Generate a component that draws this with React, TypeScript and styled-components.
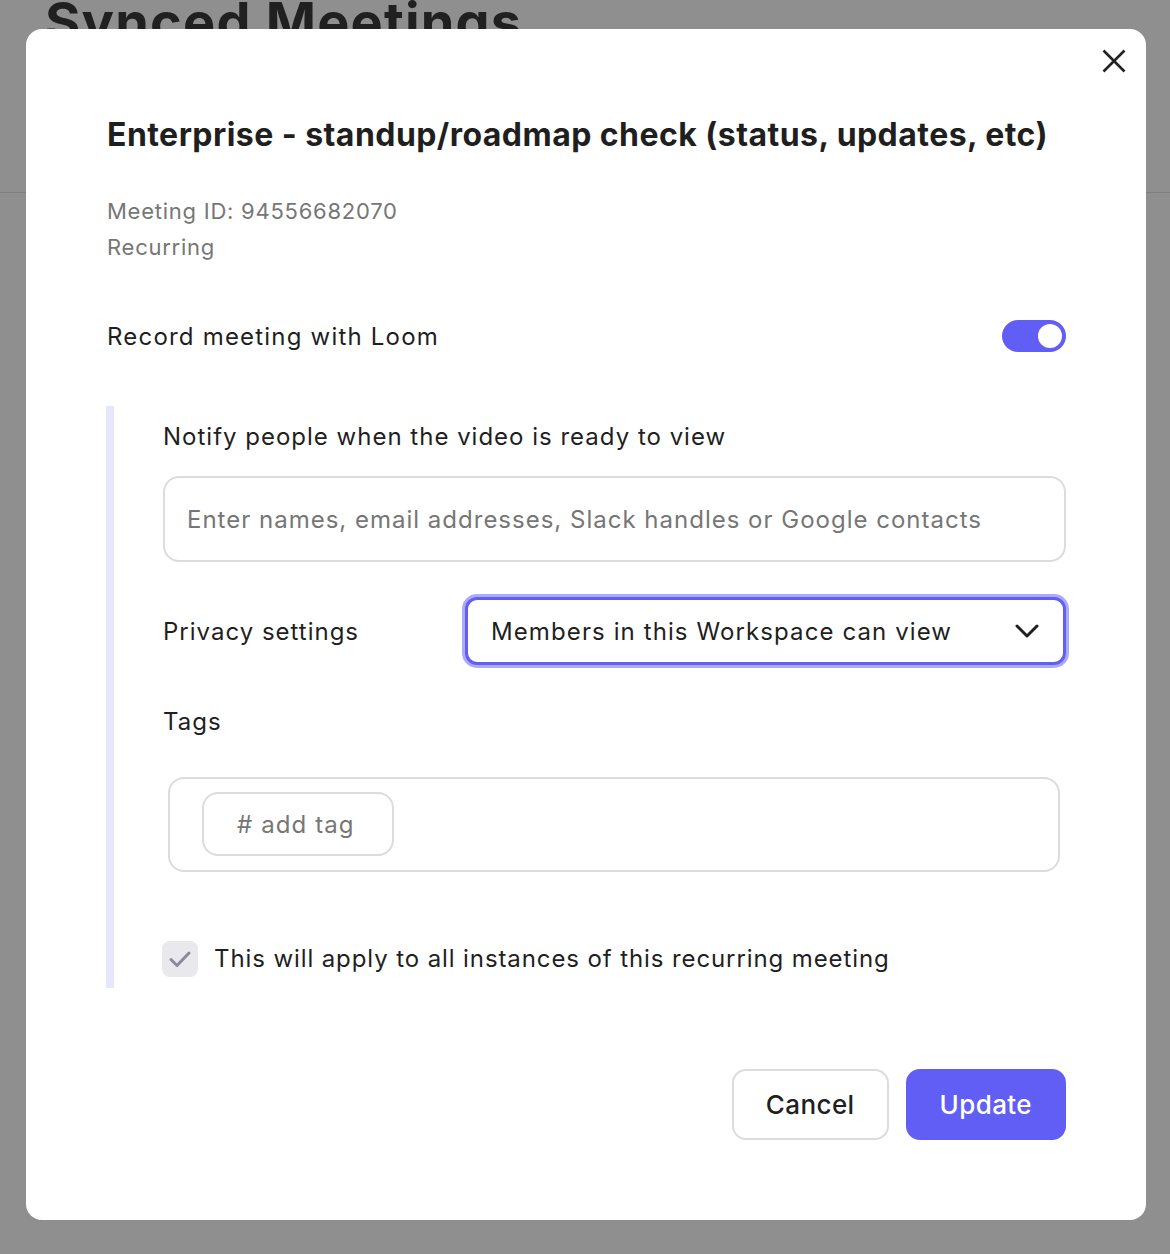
import React, { useState } from 'react';
import styled, { createGlobalStyle } from 'styled-components';

const GlobalStyle = createGlobalStyle`
  html, body {
    margin: 0;
    padding: 0;
  }
  body {
    font-family: Inter, "Open Sans", sans-serif;
    color: #1f1f1f;
    background: #ffffff;
    overflow: hidden;
  }
  * {
    box-sizing: border-box;
  }
`;

const Page = styled.div`
  height: 1254px;
  background: #ffffff;
`;

const PageHeader = styled.header`
  display: flow-root;
  height: 193px;
  padding: 0 45px;
  border-bottom: 1px solid #e2e2e2;
`;

const PageTitle = styled.h1`
  margin: -5px 0 0;
  font-size: 54px;
  line-height: 54px;
  font-weight: 700;
  color: #3a3a3a;
  letter-spacing: 1.2px;
`;

const Overlay = styled.div`
  position: fixed;
  inset: 0;
  background: rgba(0, 0, 0, 0.44);
  padding: 29px 24px 0 26px;
`;

const Modal = styled.div`
  position: relative;
  width: 1120px;
  background: #ffffff;
  border-radius: 16px;
  padding: 86px 80px 80px 81px;
  letter-spacing: 1px;
`;

const CloseButton = styled.button`
  position: absolute;
  top: 20px;
  right: 20px;
  width: 24px;
  height: 24px;
  padding: 0;
  border: 0;
  background: none;
  color: #222222;
  cursor: pointer;
`;

const Title = styled.h2`
  margin: 0;
  font-size: 32px;
  line-height: 40px;
  font-weight: 700;
  color: #1f1f1f;
  letter-spacing: 0.45px;
`;

const Meta = styled.div`
  margin-top: 38px;
  font-size: 22px;
  line-height: 36px;
  color: #767676;
  letter-spacing: 0.75px;
`;

const RecordRow = styled.div`
  margin-top: 55px;
  display: flex;
  align-items: center;
  justify-content: space-between;
  height: 32px;
  font-size: 24px;
  letter-spacing: 1.2px;
`;

const Toggle = styled.button<{ $on: boolean }>`
  position: relative;
  width: 64px;
  height: 32px;
  padding: 0;
  border: 0;
  border-radius: 16px;
  background: ${(p) => (p.$on ? '#615ef5' : '#d6d6dc')};
  cursor: pointer;

  &::after {
    content: '';
    position: absolute;
    top: 4px;
    left: ${(p) => (p.$on ? '36px' : '4px')};
    width: 24px;
    height: 24px;
    border-radius: 50%;
    background: #ffffff;
  }
`;

const Section = styled.section`
  margin: 54px 0 0 -1px;
  border-left: 8px solid #e6e6fc;
  padding: 15px 0 11px 49px;
`;

const FieldLabel = styled.div<{ $gap?: number }>`
  margin-top: ${(p) => p.$gap ?? 0}px;
  font-size: 24px;
  line-height: 32px;
`;

const TextInput = styled.input`
  display: block;
  width: 100%;
  margin-top: 23px;
  height: 86px;
  padding: 0 22px;
  border: 2px solid #dcdce0;
  border-radius: 16px;
  font-family: inherit;
  font-size: 24px;
  letter-spacing: 1px;
  color: #1f1f1f;
  outline: none;

  &::placeholder {
    color: #767676;
  }
`;

const PrivacyRow = styled.div`
  margin-top: 35px;
  display: grid;
  grid-template-columns: 302px 1fr;
  align-items: center;
  font-size: 24px;
`;

const SelectBox = styled.button`
  display: flex;
  align-items: center;
  justify-content: space-between;
  height: 68px;
  padding: 0 24px 0 23px;
  border: 3px solid #615ef5;
  border-radius: 12px;
  box-shadow: 0 0 0 3px #acaafa;
  background: #ffffff;
  font-family: inherit;
  font-size: 24px;
  letter-spacing: 1.1px;
  color: #1f1f1f;
  cursor: pointer;
`;

const TagBox = styled.div`
  margin: 39px 6px 0 5px;
  height: 95px;
  padding: 13px 30px 0 32px;
  border: 2px solid #dcdce0;
  border-radius: 16px;
`;

const TagChip = styled.button`
  height: 64px;
  width: 192px;
  padding: 0 0 0 33px;
  text-align: left;
  border: 2px solid #dcdce0;
  border-radius: 16px;
  background: #ffffff;
  font-family: inherit;
  font-size: 24px;
  letter-spacing: 1.1px;
  color: #767676;
  cursor: pointer;
`;

const CheckRow = styled.label`
  margin-top: 69px;
  display: flex;
  align-items: center;
  gap: 16px;
  font-size: 24px;
  line-height: 36px;
  letter-spacing: 0.9px;
`;

const CheckBox = styled.span`
  display: flex;
  align-items: center;
  justify-content: center;
  width: 36px;
  height: 36px;
  margin-left: -1px;
  border-radius: 8px;
  background: #e8e8ed;
  color: #8b8a9b;
`;

const Footer = styled.div`
  margin-top: 81px;
  display: flex;
  justify-content: flex-end;
  gap: 17px;
`;

const Button = styled.button<{ $primary?: boolean }>`
  height: 71px;
  padding: 0 32px;
  border-radius: 14px;
  border: 2px solid ${(p) => (p.$primary ? '#615ef5' : '#dcdce0')};
  background: ${(p) => (p.$primary ? '#615ef5' : '#ffffff')};
  color: ${(p) => (p.$primary ? '#ffffff' : '#1f1f1f')};
  font-family: inherit;
  font-size: 26px;
  font-weight: 500;
  letter-spacing: 0.4px;
  cursor: pointer;
`;

const App: React.FC = () => {
  const [record, setRecord] = useState(true);

  return (
    <>
      <GlobalStyle />
      <Page>
        <PageHeader>
          <PageTitle>Synced Meetings</PageTitle>
        </PageHeader>
      </Page>
      <Overlay>
        <Modal>
          <CloseButton aria-label="Close">
            <svg width="24" height="24" viewBox="0 0 24 24" fill="none" stroke="currentColor" strokeWidth="2.6">
              <path d="M1.5 1.5L22.5 22.5M22.5 1.5L1.5 22.5" />
            </svg>
          </CloseButton>
          <Title>Enterprise - standup/roadmap check (status, updates, etc)</Title>
          <Meta>
            <div>Meeting ID: 94556682070</div>
            <div>Recurring</div>
          </Meta>
          <RecordRow>
            <span>Record meeting with Loom</span>
            <Toggle $on={record} onClick={(): void => setRecord(!record)} aria-label="Record meeting with Loom" />
          </RecordRow>
          <Section>
            <FieldLabel>Notify people when the video is ready to view</FieldLabel>
            <TextInput placeholder="Enter names, email addresses, Slack handles or Google contacts" />
            <PrivacyRow>
              <span>Privacy settings</span>
              <SelectBox>
                <span>Members in this Workspace can view</span>
                <svg width="24" height="24" viewBox="0 0 24 24" fill="none" stroke="#1f1f1f" strokeWidth="3" strokeLinecap="round" strokeLinejoin="round">
                  <path d="M2 7l10 10 10-10" />
                </svg>
              </SelectBox>
            </PrivacyRow>
            <FieldLabel $gap={41}>Tags</FieldLabel>
            <TagBox>
              <TagChip># add tag</TagChip>
            </TagBox>
            <CheckRow>
              <CheckBox>
                <svg width="24" height="24" viewBox="0 0 24 24" fill="none" stroke="currentColor" strokeWidth="3" strokeLinecap="round" strokeLinejoin="round">
                  <path d="M3 12.5l6 6L21 6" />
                </svg>
              </CheckBox>
              <span>This will apply to all instances of this recurring meeting</span>
            </CheckRow>
          </Section>
          <Footer>
            <Button>Cancel</Button>
            <Button $primary>Update</Button>
          </Footer>
        </Modal>
      </Overlay>
    </>
  );
};

export default App;
